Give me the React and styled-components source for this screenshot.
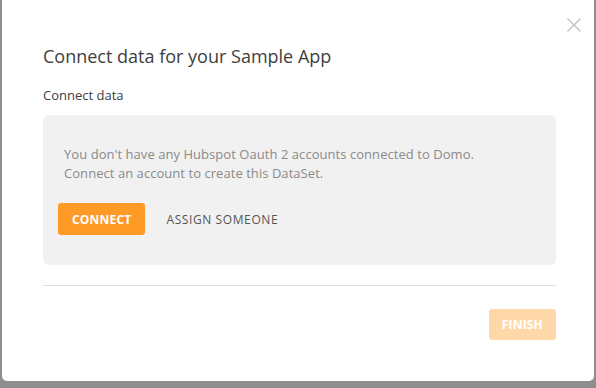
import React from "react";
import styled, { createGlobalStyle } from "styled-components";

const Global = createGlobalStyle`
  html, body { margin: 0; padding: 0; }
  body {
    background: #8e8e8e;
    font-family: "Open Sans", "Liberation Sans", sans-serif;
    width: 596px;
    height: 388px;
    overflow: hidden;
  }
`;

const Overlay = styled.div`
  width: 596px;
  height: 388px;
  padding: 0 2px;
  box-sizing: border-box;
`;

const Modal = styled.div`
  position: relative;
  margin-top: -6px;
  height: 387px;
  background: #fff;
  border-radius: 5px;
  box-sizing: border-box;
  padding: 50px 38px 0 41px;
  display: flex;
  flex-direction: column;
`;

const Close = styled.button`
  position: absolute;
  top: 22px;
  right: 11px;
  width: 18px;
  height: 18px;
  padding: 0;
  border: 0;
  background: none;
  display: flex;
  align-items: center;
  justify-content: center;
`;

const Title = styled.h1`
  margin: 0;
  font-size: 18px;
  font-weight: 400;
  color: #3e3e3e;
  line-height: 24px;
`;

const Label = styled.div`
  margin-top: 18px;
  font-size: 13px;
  color: #3e3e3e;
  line-height: 18px;
`;

const Panel = styled.div`
  margin-top: 11px;
  background: #f1f1f1;
  border-radius: 6px;
  height: 150px;
  box-sizing: border-box;
  padding: 30px 21px 0 21px;
`;

const Message = styled.p`
  margin: 0;
  font-size: 13px;
  line-height: 19px;
  color: #8a8a8a;
  letter-spacing: 0.05px;
`;

const Actions = styled.div`
  display: flex;
  align-items: center;
  gap: 21px;
  margin-top: 20px;
  margin-left: -6px;
`;

const Button = styled.button`
  height: ${(p) => p.$h || 32}px;
  padding: 0 ${(p) => p.$px || 14}px;
  border: 0;
  border-radius: 3px;
  background: ${(p) => (p.$disabled ? "#ffd8aa" : "#ff9a27")};
  color: #fff;
  font-family: "Open Sans", "Liberation Sans", sans-serif;
  font-size: 12px;
  font-weight: 700;
  letter-spacing: 0.2px;
`;

const TextButton = styled.button`
  border: 0;
  background: none;
  padding: 0;
  font-family: "Open Sans", "Liberation Sans", sans-serif;
  font-size: 12px;
  font-weight: 400;
  color: #555;
  letter-spacing: 0.6px;
`;

const Divider = styled.hr`
  margin: 20px 0 0 0;
  border: 0;
  border-top: 1px solid #dedede;
`;

const Footer = styled.div`
  display: flex;
  justify-content: flex-end;
  margin-top: 23px;
`;

export default function App() {
  return (
    <>
      <Global />
      <Overlay>
        <Modal>
          <Close aria-label="close">
            <svg width="16" height="16" viewBox="0 0 16 16">
              <path d="M1.5 1.5 L14.5 14.5 M14.5 1.5 L1.5 14.5" stroke="#c0c0c0" strokeWidth="1.4" fill="none" />
            </svg>
          </Close>
          <Title>Connect data for your Sample App</Title>
          <Label>Connect data</Label>
          <Panel>
            <Message>
              You don't have any Hubspot Oauth 2 accounts connected to Domo.
              <br />
              Connect an account to create this DataSet.
            </Message>
            <Actions>
              <Button>CONNECT</Button>
              <TextButton>ASSIGN SOMEONE</TextButton>
            </Actions>
          </Panel>
          <Divider />
          <Footer>
            <Button $disabled $px={13} $h={31}>FINISH</Button>
          </Footer>
        </Modal>
      </Overlay>
    </>
  );
}
